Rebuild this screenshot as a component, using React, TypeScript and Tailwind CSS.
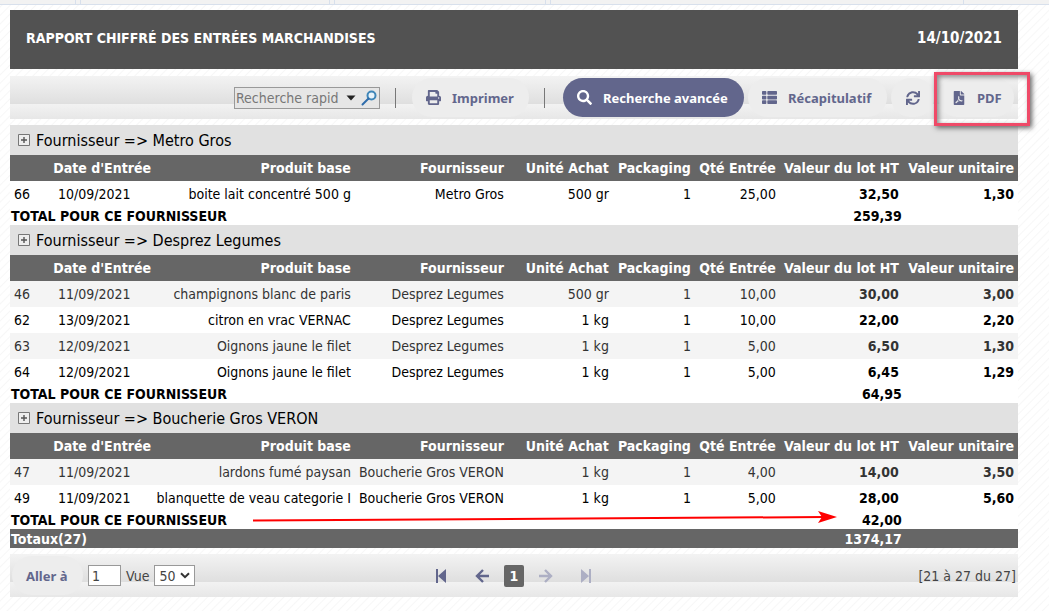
import { FaFilePdf, FaPrint, FaSearch, FaSync, FaThList } from "react-icons/fa";

type Row = string[];

type Group = {
  name: string;
  total: string;
  rows: Row[];
};

const columns = [
  "Produit base",
  "Fournisseur",
  "Unité Achat",
  "Packaging",
  "Qté Entrée",
  "Valeur du lot HT",
  "Valeur unitaire",
];

const groups: Group[] = [
  {
    name: "Metro Gros",
    total: "259,39",
    rows: [["66", "10/09/2021", "boite lait concentré 500 g", "Metro Gros", "500 gr", "1", "25,00", "32,50", "1,30"]],
  },
  {
    name: "Desprez Legumes",
    total: "64,95",
    rows: [
      ["46", "11/09/2021", "champignons blanc de paris", "Desprez Legumes", "500 gr", "1", "10,00", "30,00", "3,00"],
      ["62", "13/09/2021", "citron en vrac VERNAC", "Desprez Legumes", "1 kg", "1", "10,00", "22,00", "2,20"],
      ["63", "12/09/2021", "Oignons jaune le filet", "Desprez Legumes", "1 kg", "1", "5,00", "6,50", "1,30"],
      ["64", "12/09/2021", "Oignons jaune le filet", "Desprez Legumes", "1 kg", "1", "5,00", "6,45", "1,29"],
    ],
  },
  {
    name: "Boucherie Gros VERON",
    total: "42,00",
    rows: [
      ["47", "11/09/2021", "lardons fumé paysan", "Boucherie Gros VERON", "1 kg", "1", "4,00", "14,00", "3,50"],
      ["49", "11/09/2021", "blanquette de veau categorie I", "Boucherie Gros VERON", "1 kg", "1", "5,00", "28,00", "5,60"],
    ],
  },
];

const barStyle =
  "flex h-[43px] items-center bg-[linear-gradient(#f3f3f3_0%,#dfdfdf_65%,#f2f2f2_66%,#e7e7e7_100%)]";
const pill =
  "flex h-[39px] items-center rounded-full bg-[#ededed] font-['Noto_Sans',sans-serif] text-[13px] font-bold text-[#62668c]";

function Toolbar() {
  return (
    <div className={`${barStyle} mt-[7px] justify-end`}>
      <div className="mr-[15px] flex h-[22px] w-[146px] items-center border border-[#999] bg-[#e6e6e6]">
        <input
          aria-label="Recherche rapide"
          placeholder="Recherche rapid"
          className="w-[108px] min-w-0 bg-transparent pl-px text-sm text-[#777] outline-none placeholder:text-[#777]"
        />
        <button aria-label="Options de recherche" className="flex w-4 justify-center">
          <svg width="10" height="6" viewBox="0 0 10 6" fill="#222">
            <path d="M0.5 0.5h9L5 5.5z" />
          </svg>
        </button>
        <button aria-label="Rechercher" className="flex w-5 justify-center">
          <svg width="16" height="16" viewBox="0 0 16 16" fill="none">
            <circle cx="10.5" cy="5.5" r="4" stroke="#3f86b8" strokeWidth="2" fill="#e8f3fa" />
            <path d="M7.5 8.5L1.5 14.5" stroke="#2f6cab" strokeWidth="2" strokeLinecap="round" />
          </svg>
        </button>
      </div>
      <span className="mr-4 h-5 w-px bg-[#777]" />
      <button className={`${pill} mr-[15px] w-[117px] gap-[11px] pl-[14px]`}>
        <FaPrint size={15} />
        Imprimer
      </button>
      <span className="mr-[18px] h-5 w-px bg-[#777]" />
      <button className="mr-1 flex h-[39px] w-[181px] items-center gap-[11px] rounded-full bg-[#62668c] pl-[14px] font-['Noto_Sans',sans-serif] text-[13px] font-bold text-white">
        <FaSearch size={15} />
        Recherche avancée
      </button>
      <button className={`${pill} mr-1 w-[139px] gap-[11px] pl-[14px]`}>
        <FaThList size={15} />
        Récapitulatif
      </button>
      <button aria-label="Actualiser" className={`${pill} mr-1 w-[43px] justify-center`}>
        <FaSync size={14} />
      </button>
      <div className="relative z-10 mr-1">
        <button className={`${pill} w-[76px] gap-[11px] pl-[14px]`}>
          <FaFilePdf size={14} />
          PDF
        </button>
        <span className="pointer-events-none absolute -top-[6px] -left-[4px] h-[54px] w-[96px] border-3 border-[#ef4a68] shadow-[2px_2px_5px_#666,inset_2px_2px_5px_#888]" />
      </div>
    </div>
  );
}

function GroupRows({ group }: { group: Group }) {
  return (
    <tbody>
      <tr className="h-[30px] bg-[#e1e1e1]">
        <th colSpan={9} className="text-left text-base font-normal">
          <div className="flex items-center pt-[2px] pl-2">
            <button aria-label="Développer" className="mr-[6px] pb-[2px]">
              <svg width="12" height="12" viewBox="0 0 12 12" fill="none">
                <path d="M0.5 0.5h11v11h-11z" fill="#eee" stroke="#777" />
                <path d="M3 6h6M6 3v6" stroke="#555" strokeWidth="1.4" />
              </svg>
            </button>
            Fournisseur =&gt; {group.name}
          </div>
        </th>
      </tr>
      <tr className="h-[26px] bg-[#666] text-right text-white">
        <th />
        <th className="pr-1">Date d'Entrée</th>
        {columns.map((column) => (
          <th key={column} className="pr-1">
            {column}
          </th>
        ))}
      </tr>
      {group.rows.map((row, index) => (
        <tr
          key={row[0]}
          className={
            index % 2 === 0 && group.name !== "Metro Gros"
              ? "h-[26px] bg-[#f4f4f4] text-right text-[#333]"
              : "h-[26px] bg-white text-right text-black"
          }
        >
          <td className="pl-1 text-left">{row[0]}</td>
          <td className="pl-[9px] text-left">{row[1]}</td>
          {row.slice(2).map((cell, i) => (
            <td key={i} className={i > 4 ? "pr-1 font-bold" : "pr-1"}>
              {cell}
            </td>
          ))}
        </tr>
      ))}
      <tr className="h-[18px] bg-white font-bold">
        <td colSpan={7} className="pl-px">
          TOTAL POUR CE FOURNISSEUR
        </td>
        <td className="pr-px text-right">{group.total}</td>
        <td />
      </tr>
    </tbody>
  );
}

function Pagination() {
  return (
    <div className={`${barStyle} mt-[6px] pl-[2px] text-[#444]`}>
      <div className="flex flex-1 items-center">
        <button className={`${pill} mr-[5px] w-[71px] pl-[14px]`}>Aller à</button>
        <input
          aria-label="Page"
          defaultValue="1"
          className="mr-[5px] h-[21px] w-[33px] border border-[#999] bg-white pl-[3px]"
        />
        <label htmlFor="vue" className="mr-[5px]">
          Vue
        </label>
        <div className="relative">
          <select
            id="vue"
            defaultValue="50"
            className="block h-[21px] w-[41px] appearance-none border border-[#999] bg-white pl-1 leading-4"
          >
            <option>50</option>
            <option>100</option>
          </select>
          <svg
            className="pointer-events-none absolute top-[7px] right-[5px]"
            width="10"
            height="7"
            viewBox="0 0 10 7"
            fill="none"
          >
            <path d="M1 1.2l4 4 4-4" stroke="#333" strokeWidth="2" />
          </svg>
        </div>
      </div>
      <div className="flex items-center text-[#62668c]">
        <button aria-label="Première page" className="mr-[27px]">
          <svg width="13" height="14" viewBox="0 0 13 14" fill="currentColor">
            <path d="M1 0h2v14H1zM11 0v14L3 7z" />
          </svg>
        </button>
        <button aria-label="Page précédente" className="mr-[15px]">
          <svg width="14" height="14" viewBox="0 0 14 14" fill="none" stroke="currentColor" strokeWidth="2.4">
            <path d="M14 7H2M8 1L2 7L8 13" />
          </svg>
        </button>
        <button className="mr-[15px] h-[22px] w-5 rounded-xs bg-[#666] font-bold text-white">1</button>
        <button aria-label="Page suivante" disabled className="mr-[28px] text-[#adafc4]">
          <svg width="14" height="14" viewBox="0 0 14 14" fill="none" stroke="currentColor" strokeWidth="2.4">
            <path d="M0 7h12M6 1l6 6L6 13" />
          </svg>
        </button>
        <button aria-label="Dernière page" disabled className="text-[#adafc4]">
          <svg width="12" height="14" viewBox="0 0 12 14" fill="currentColor">
            <path d="M8 0h2v14H8zM0 0v14l8-7z" />
          </svg>
        </button>
      </div>
      <div className="flex-1 pr-[2px] text-right">[21 à 27 du 27]</div>
    </div>
  );
}

export default function App() {
  return (
    <div className="min-h-screen bg-[repeating-linear-gradient(135deg,#fff_0px,#fff_4px,#f7f7f7_5px,#fff_6px)] font-['DejaVu_Sans_Condensed','DejaVu_Sans',sans-serif] text-sm leading-[18px]">
      <div className="flex h-[5px] gap-1 border-b border-[#d8e0ec] bg-[#f2f2f2]">
        <span className="w-[76px] border-r border-[#d8e0ec]" />
        <span className="w-[250px] border-x border-[#d8e0ec]" />
        <span className="w-[212px] border-x border-[#d8e0ec]" />
        <span className="flex-1 border-l border-[#d8e0ec]" />
        <span className="w-[86px] border-l border-[#d8e0ec]" />
      </div>
      <main className="mt-[5px] mr-[31px] ml-[10px]">
        <header className="flex h-[59px] items-center justify-between bg-[#525252] px-4 pb-[3px] font-bold text-white">
          <h1>RAPPORT CHIFFRÉ DES ENTRÉES MARCHANDISES</h1>
          <span className="text-[15px]">14/10/2021</span>
        </header>
        <Toolbar />
        <div className="relative mt-[6px]">
          <table className="w-full table-fixed border-collapse whitespace-nowrap">
            <colgroup>
              <col className="w-[39px]" />
              <col className="w-[106px]" />
              <col />
              <col className="w-[153px]" />
              <col className="w-[105px]" />
              <col className="w-[82px]" />
              <col className="w-[85px]" />
              <col className="w-[123px]" />
              <col className="w-[115px]" />
            </colgroup>
            {groups.map((group) => (
              <GroupRows key={group.name} group={group} />
            ))}
            <tfoot>
              <tr className="h-[19px] bg-[#666] font-bold text-white">
                <td colSpan={7} className="pl-px">
                  Totaux(27)
                </td>
                <td className="pr-px text-right">1374,17</td>
                <td />
              </tr>
            </tfoot>
          </table>
          <svg
            className="pointer-events-none absolute bottom-[24px] left-[243px]"
            width="584"
            height="14"
            viewBox="0 0 584 14"
          >
            <path d="M0 10.5L572 7" stroke="#f00" strokeWidth="2" />
            <path d="M584 7L565 1l4 6-4 6z" fill="#f00" />
          </svg>
        </div>
        <Pagination />
      </main>
    </div>
  );
}
